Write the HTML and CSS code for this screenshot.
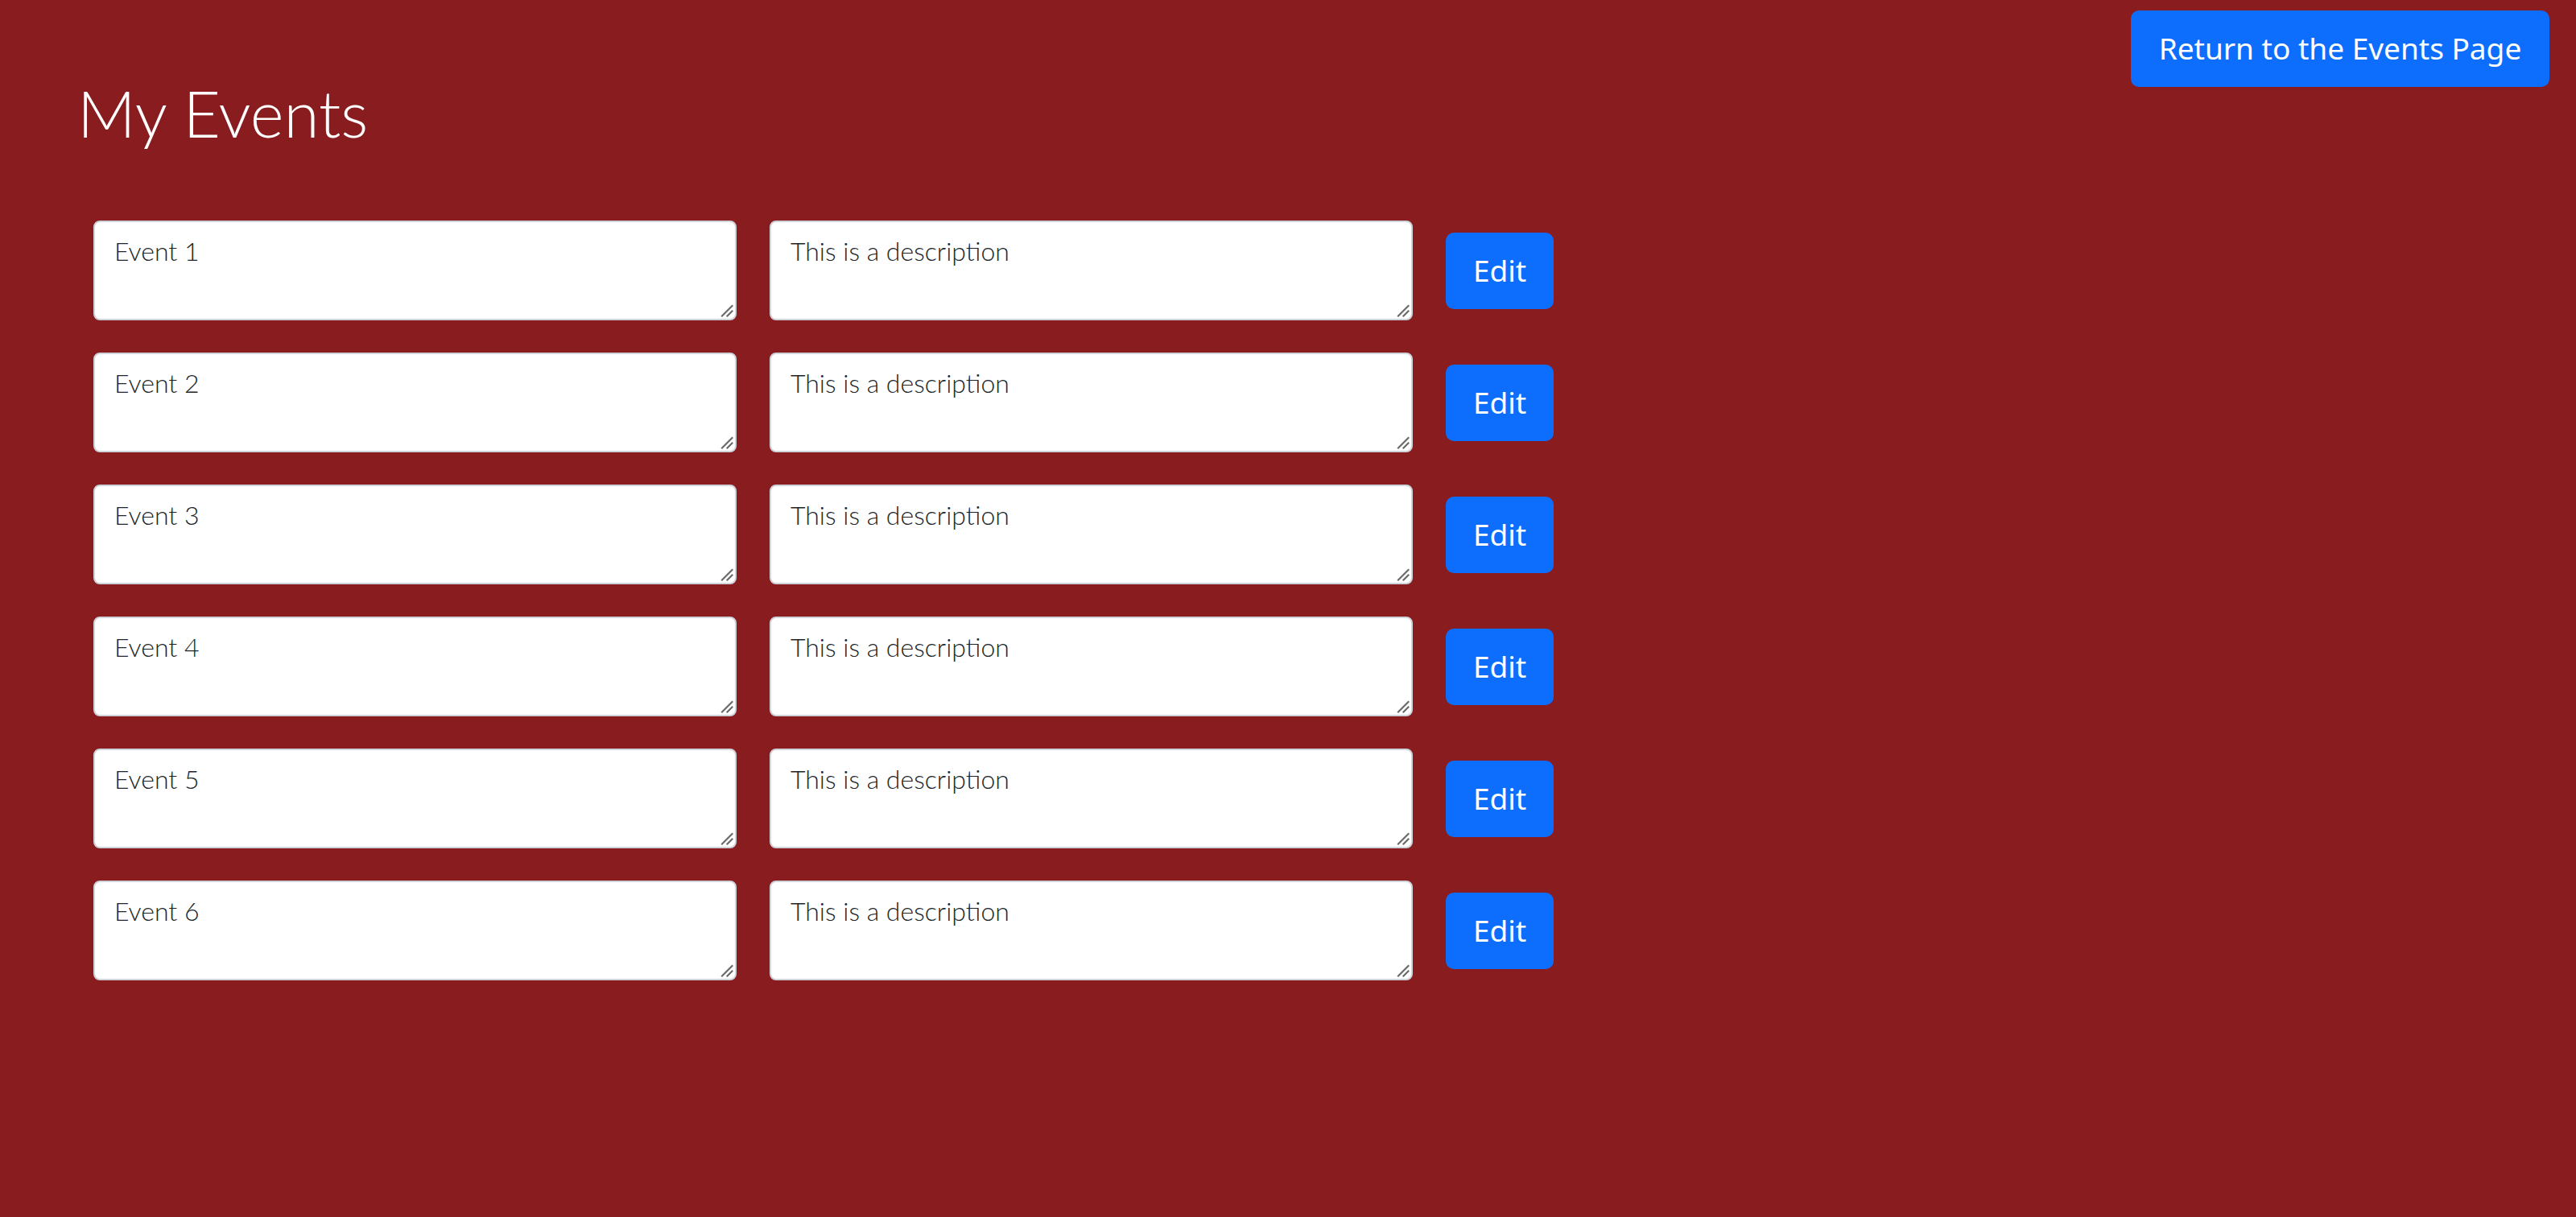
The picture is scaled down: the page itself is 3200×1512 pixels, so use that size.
FILE: index.html
```html
<!DOCTYPE html>
<html lang="en">
<head>
<meta charset="utf-8">
<title>My Events</title>
<link rel="stylesheet" href="styles.css">
</head>
<body>
<header class="topbar">
  <a class="btn btn-lg btn-return" href="#">Return to the Events Page</a>
</header>
<main class="page">
  <h1 class="title">My Events</h1>
  <div class="events">
    <div class="event-row">
      <div class="field-wrap"><textarea class="field" rows="2">Event 1</textarea><svg class="grip" viewBox="0 0 16 16"><path d="M14.5 2 L2 14.5 M14.5 8.5 L8.5 14.5"/></svg></div>
      <div class="field-wrap"><textarea class="field" rows="2">This is a description</textarea><svg class="grip" viewBox="0 0 16 16"><path d="M14.5 2 L2 14.5 M14.5 8.5 L8.5 14.5"/></svg></div>
      <button class="btn btn-lg btn-edit">Edit</button>
    </div>
    <div class="event-row">
      <div class="field-wrap"><textarea class="field" rows="2">Event 2</textarea><svg class="grip" viewBox="0 0 16 16"><path d="M14.5 2 L2 14.5 M14.5 8.5 L8.5 14.5"/></svg></div>
      <div class="field-wrap"><textarea class="field" rows="2">This is a description</textarea><svg class="grip" viewBox="0 0 16 16"><path d="M14.5 2 L2 14.5 M14.5 8.5 L8.5 14.5"/></svg></div>
      <button class="btn btn-lg btn-edit">Edit</button>
    </div>
    <div class="event-row">
      <div class="field-wrap"><textarea class="field" rows="2">Event 3</textarea><svg class="grip" viewBox="0 0 16 16"><path d="M14.5 2 L2 14.5 M14.5 8.5 L8.5 14.5"/></svg></div>
      <div class="field-wrap"><textarea class="field" rows="2">This is a description</textarea><svg class="grip" viewBox="0 0 16 16"><path d="M14.5 2 L2 14.5 M14.5 8.5 L8.5 14.5"/></svg></div>
      <button class="btn btn-lg btn-edit">Edit</button>
    </div>
    <div class="event-row">
      <div class="field-wrap"><textarea class="field" rows="2">Event 4</textarea><svg class="grip" viewBox="0 0 16 16"><path d="M14.5 2 L2 14.5 M14.5 8.5 L8.5 14.5"/></svg></div>
      <div class="field-wrap"><textarea class="field" rows="2">This is a description</textarea><svg class="grip" viewBox="0 0 16 16"><path d="M14.5 2 L2 14.5 M14.5 8.5 L8.5 14.5"/></svg></div>
      <button class="btn btn-lg btn-edit">Edit</button>
    </div>
    <div class="event-row">
      <div class="field-wrap"><textarea class="field" rows="2">Event 5</textarea><svg class="grip" viewBox="0 0 16 16"><path d="M14.5 2 L2 14.5 M14.5 8.5 L8.5 14.5"/></svg></div>
      <div class="field-wrap"><textarea class="field" rows="2">This is a description</textarea><svg class="grip" viewBox="0 0 16 16"><path d="M14.5 2 L2 14.5 M14.5 8.5 L8.5 14.5"/></svg></div>
      <button class="btn btn-lg btn-edit">Edit</button>
    </div>
    <div class="event-row">
      <div class="field-wrap"><textarea class="field" rows="2">Event 6</textarea><svg class="grip" viewBox="0 0 16 16"><path d="M14.5 2 L2 14.5 M14.5 8.5 L8.5 14.5"/></svg></div>
      <div class="field-wrap"><textarea class="field" rows="2">This is a description</textarea><svg class="grip" viewBox="0 0 16 16"><path d="M14.5 2 L2 14.5 M14.5 8.5 L8.5 14.5"/></svg></div>
      <button class="btn btn-lg btn-edit">Edit</button>
    </div>
  </div>
</main>
</body>
</html>
```

FILE: styles.css
```css
* { box-sizing: border-box; }

html, body {
  margin: 0;
  padding: 0;
  height: 100%;
}

body {
  background: #891c1e;
  font-family: "Lato", "Noto Sans", sans-serif;
  color: #212529;
}

.topbar {
  display: flex;
  justify-content: flex-end;
  padding: 13px 33px 0 0;
  height: 108px;
}

.btn {
  display: inline-block;
  font-family: "Noto Sans", "Open Sans", sans-serif;
  font-weight: 400;
  color: #fff;
  background: #0d6efd;
  border: 2px solid #0d6efd;
  text-decoration: none;
  text-align: center;
  cursor: pointer;
}

.btn-lg {
  font-size: 40px;
  line-height: 60px;
  padding: 15px 32px;
  border-radius: 10px;
}

.btn-return {
  width: 520px;
  font-size: 37px;
  padding-left: 0;
  padding-right: 0;
  white-space: nowrap;
}

.btn-edit {
  width: 134px;
  height: 95px;
  padding: 0;
  font-size: 37px;
}

.page {
  padding: 0 0 0 96px;
}

.title {
  margin: -16px 0 0 0;
  font-size: 80px;
  line-height: 96px;
  font-weight: 300;
  color: #fff;
}

.events {
  display: flex;
  flex-direction: column;
  gap: 40px;
  margin-top: 86px;
  padding-left: 20px;
}

.event-row {
  display: flex;
  align-items: center;
  gap: 41px;
}

.field-wrap {
  position: relative;
  width: 799px;
  height: 124px;
}

.field {
  display: block;
  width: 100%;
  height: 100%;
  padding: 12px 24px;
  border: 2px solid #ced4da;
  border-radius: 8px;
  background: #fff;
  font-family: "Lato", "Noto Sans", sans-serif;
  font-weight: 300;
  font-size: 32px;
  line-height: 48px;
  color: #212529;
  resize: none;
  outline: none;
}

.grip {
  position: absolute;
  right: 4px;
  bottom: 4px;
  width: 16px;
  height: 16px;
  fill: none;
  stroke: #6b6b6b;
  stroke-width: 2.2;
  stroke-linecap: square;
  pointer-events: none;
}
```
